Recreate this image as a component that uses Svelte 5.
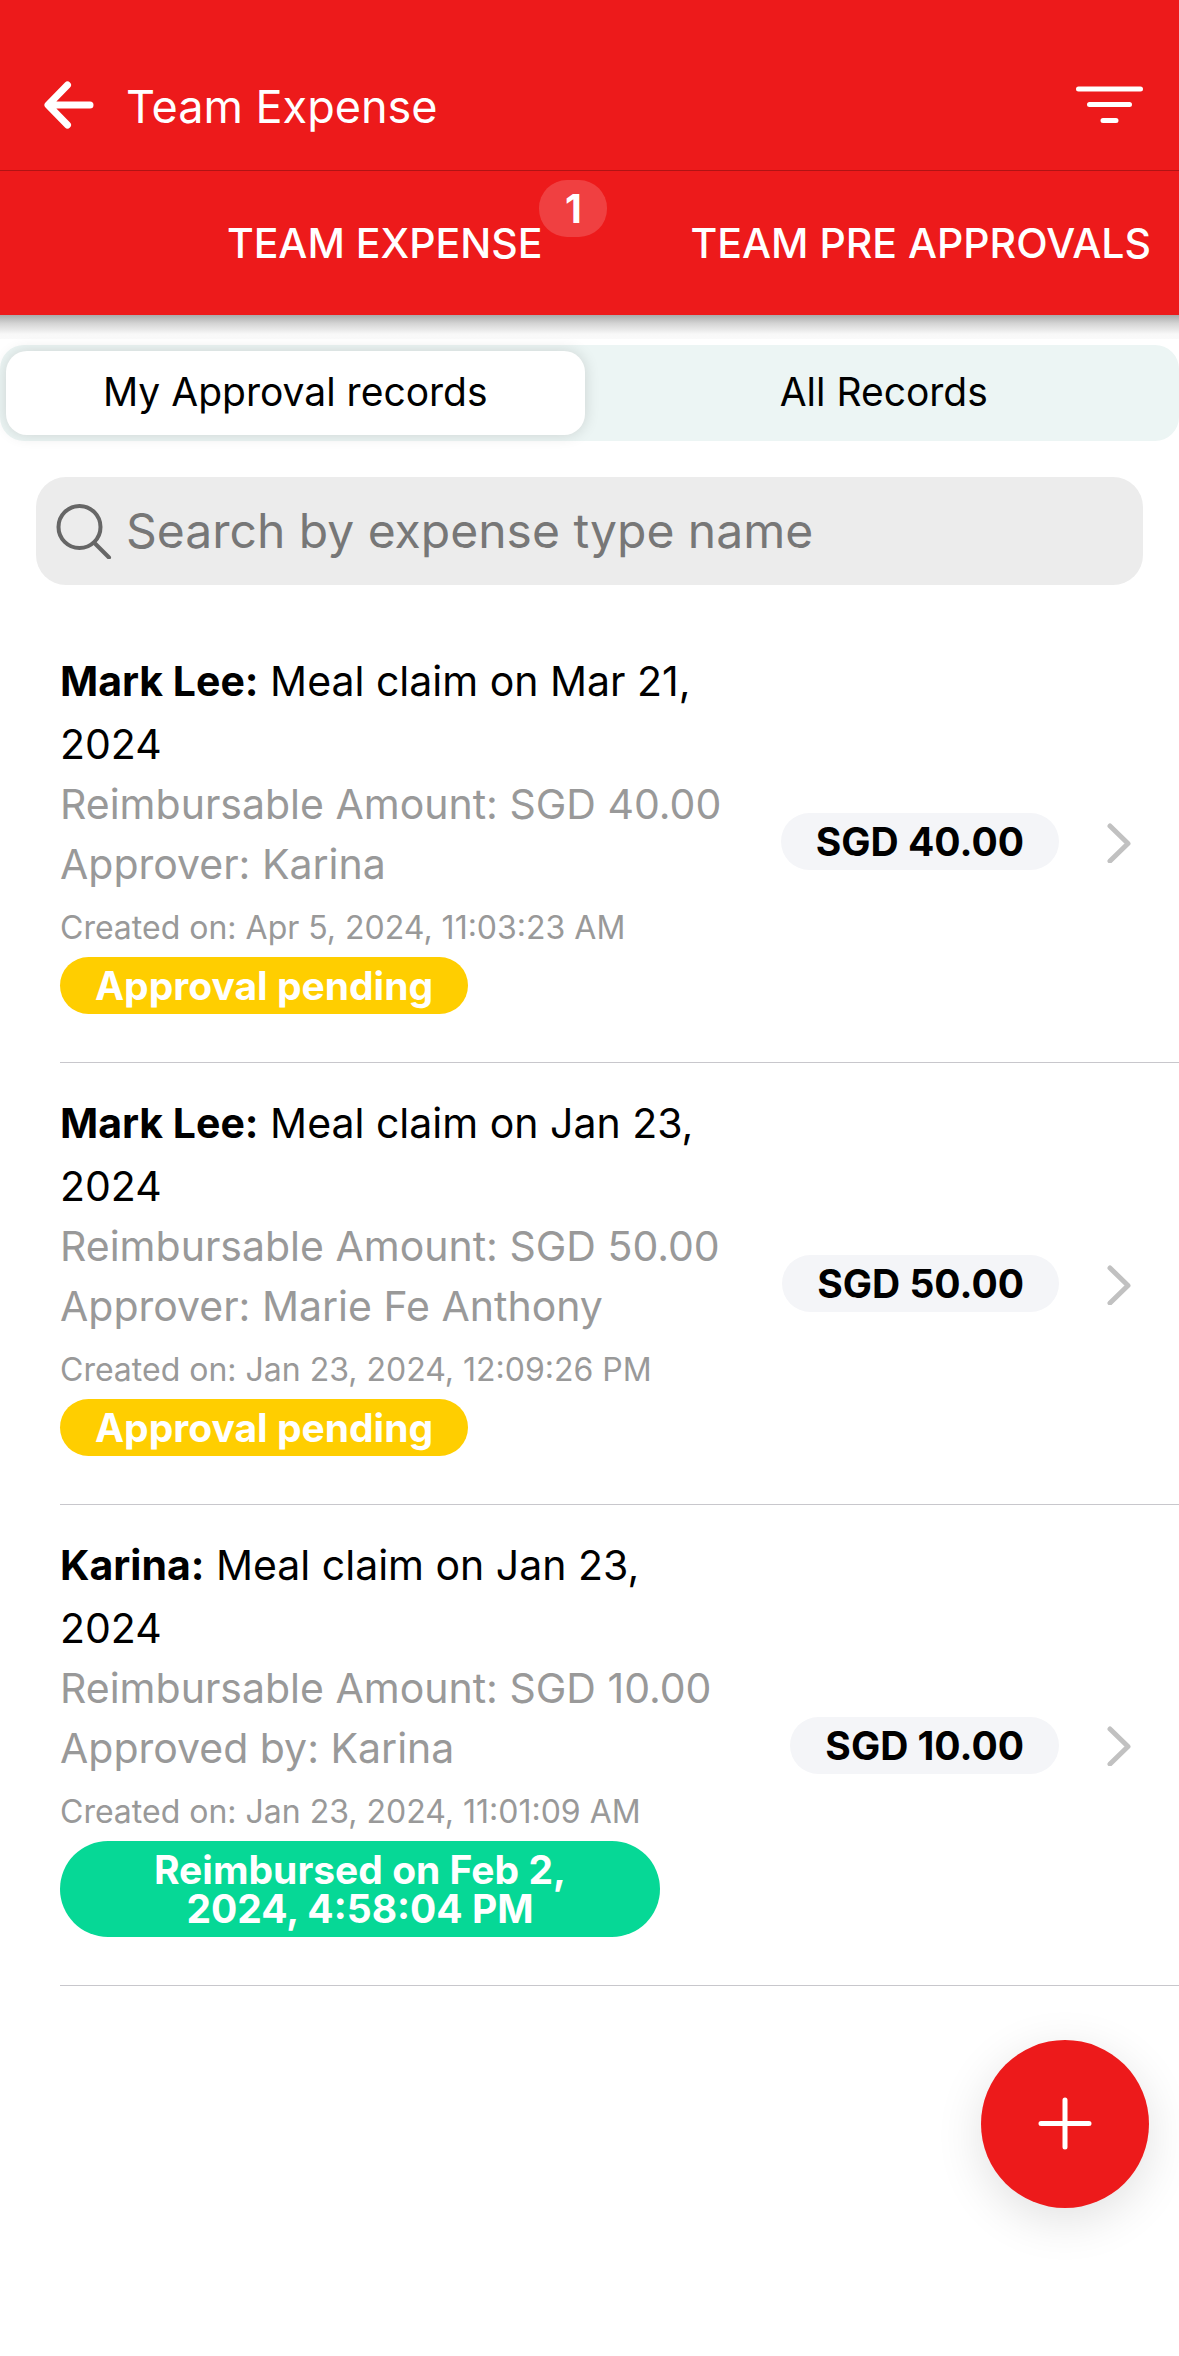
<script lang="ts">
	interface Expense {
		id: number;
		owner: string;
		title: string;
		amount: string;
		approval: string;
		createdOn: string;
		status: string;
		state: 'pending' | 'reimbursed';
	}

	const tabs = [
		{ id: 'expense', label: 'TEAM EXPENSE', count: 1 },
		{ id: 'pre-approvals', label: 'TEAM PRE APPROVALS', count: 0 }
	];

	const segments = [
		{ id: 'mine', label: 'My Approval records' },
		{ id: 'all', label: 'All Records' }
	];

	const expenses: Expense[] = [
		{
			id: 1,
			owner: 'Mark Lee',
			title: 'Meal claim on Mar 21, 2024',
			amount: 'SGD 40.00',
			approval: 'Approver: Karina',
			createdOn: 'Apr 5, 2024, 11:03:23 AM',
			status: 'Approval pending',
			state: 'pending'
		},
		{
			id: 2,
			owner: 'Mark Lee',
			title: 'Meal claim on Jan 23, 2024',
			amount: 'SGD 50.00',
			approval: 'Approver: Marie Fe Anthony',
			createdOn: 'Jan 23, 2024, 12:09:26 PM',
			status: 'Approval pending',
			state: 'pending'
		},
		{
			id: 3,
			owner: 'Karina',
			title: 'Meal claim on Jan 23, 2024',
			amount: 'SGD 10.00',
			approval: 'Approved by: Karina',
			createdOn: 'Jan 23, 2024, 11:01:09 AM',
			status: 'Reimbursed on Feb 2, 2024, 4:58:04 PM',
			state: 'reimbursed'
		}
	];

	let activeTab = $state('expense');
	let activeSegment = $state('mine');
	let search = $state('');

	const visible = $derived(
		expenses.filter((e) => e.title.toLowerCase().includes(search.trim().toLowerCase()))
	);
</script>

<div class="page">
	<header>
		<div class="toolbar">
			<button class="icon-btn" aria-label="Back">
				<svg width="52" height="52" viewBox="0 0 52 52" fill="none" stroke="currentColor" stroke-width="7" stroke-linecap="round" stroke-linejoin="round">
					<path d="M25.500 6 6 26l19.500 20M7 26h41" />
				</svg>
			</button>
			<h1>Team Expense</h1>
			<button class="icon-btn" aria-label="Filter">
				<svg width="67" height="40" viewBox="0 0 67 40" fill="none" stroke="currentColor" stroke-width="5" stroke-linecap="round">
					<path d="M2.500 4h62M13.500 19.500h40M27 35.500h13" />
				</svg>
			</button>
		</div>

		<nav class="tabs">
			{#each tabs as tab (tab.id)}
				<button
					class="tab"
					aria-current={activeTab === tab.id ? 'page' : undefined}
					onclick={() => (activeTab = tab.id)}
				>
					{tab.label}
					{#if tab.count}
						<span class="count">{tab.count}</span>
					{/if}
				</button>
			{/each}
		</nav>
	</header>

	<main>
		<div class="header-shadow"></div>

		<div class="segment">
			{#each segments as segment (segment.id)}
				<button
					class:active={activeSegment === segment.id}
					aria-pressed={activeSegment === segment.id}
					onclick={() => (activeSegment = segment.id)}
				>
					{segment.label}
				</button>
			{/each}
		</div>

		<label class="search">
			<svg width="56" height="56" viewBox="0 0 56 56" fill="none" stroke="currentColor" stroke-width="4" stroke-linecap="round">
				<circle cx="23.500" cy="24" r="21" />
				<path d="m38.500 40 14.500 14.500" />
			</svg>
			<input
				type="search"
				aria-label="Search by expense type name"
				placeholder="Search by expense type name"
				bind:value={search}
			/>
		</label>

		<ul class="list">
			{#each visible as expense (expense.id)}
				<li>
					<a class="item" href="#expense-{expense.id}">
						<div class="details">
							<h2><strong>{expense.owner}:</strong> {expense.title}</h2>
							<p>Reimbursable Amount: {expense.amount}</p>
							<p>{expense.approval}</p>
							<p class="created">Created on: {expense.createdOn}</p>
							<span class="badge {expense.state}">{expense.status}</span>
						</div>
						<span class="badge amount">{expense.amount}</span>
						<svg class="chevron" width="26" height="42" viewBox="0 0 26 42" fill="none" stroke="currentColor" stroke-width="5" stroke-linecap="round" stroke-linejoin="round">
							<path d="m5 5 18 17.500L5 40" />
						</svg>
					</a>
				</li>
			{/each}
		</ul>
	</main>

	<button class="fab" aria-label="Add expense">
		<svg width="54" height="54" viewBox="0 0 54 54" fill="none" stroke="currentColor" stroke-width="5" stroke-linecap="round">
			<path d="M27 3v47M3 26.500h48" />
		</svg>
	</button>
</div>

<style>
	:global(body) {
		background: #fff;
	}

	.page {
		min-height: 100vh;
		font-family: Inter, 'Liberation Sans', sans-serif;
		color: #000;
	}

	button {
		margin: 0;
		padding: 0;
		border: none;
		background: none;
		font: inherit;
		color: inherit;
		cursor: pointer;
	}

	svg {
		display: block;
		flex: none;
	}

	header {
		background: #ed1a1b;
		color: #fff;
	}

	.toolbar {
		display: flex;
		align-items: center;
		gap: 32px;
		height: 131px;
		padding: 39px 36px 0 42px;
		border-bottom: 1px solid rgba(0, 0, 0, 0.25);
	}

	.toolbar h1 {
		flex: 1;
		margin: 0;
		padding-top: 3px;
		font-size: 45px;
		font-weight: 400;
	}

	.tabs {
		display: flex;
		justify-content: flex-end;
		gap: 148px;
		padding: 0 28px;
	}

	.tab {
		position: relative;
		height: 144px;
		font-size: 41px;
		font-weight: 500;
		white-space: nowrap;
	}

	.count {
		position: absolute;
		top: 9px;
		left: 100%;
		width: 68px;
		margin-left: -3px;
		border-radius: 28px;
		background: rgba(255, 255, 255, 0.17);
		font-size: 39px;
		font-weight: 700;
		line-height: 57px;
		text-align: center;
	}

	.header-shadow {
		height: 24px;
		margin-bottom: 6px;
		background: linear-gradient(#aaa, #d4d4d4 35%, #f8f8f8 80%, #fafafa);
	}

	.segment {
		display: grid;
		grid-template-columns: 1fr 1fr;
		gap: 10px;
		padding: 6px;
		border-radius: 24px;
		background: #ecf5f4;
	}

	.segment button {
		height: 84px;
		padding-bottom: 3px;
		border-radius: 21px;
		font-size: 39px;
	}

	.segment button.active {
		background: #fff;
		box-shadow: 0 0 15px rgba(0, 0, 0, 0.14);
	}

	.search {
		display: flex;
		align-items: center;
		gap: 14px;
		height: 108px;
		margin: 36px 36px 0;
		padding: 0 20px;
		border-radius: 30px;
		background: #ececec;
		color: #666;
	}

	.search input {
		flex: 1;
		min-width: 0;
		padding: 0 0 2px;
		border: none;
		outline: none;
		background: none;
		font: inherit;
		font-size: 48px;
		color: #000;
	}

	.search input::placeholder {
		color: #777;
		opacity: 1;
	}

	.list {
		margin: 36px 0 0;
		padding: 0 0 0 60px;
		list-style: none;
	}

	.item {
		display: flex;
		align-items: center;
		padding-right: 48px;
		border-bottom: 1px solid #c8c7cc;
		color: inherit;
		text-decoration: none;
	}

	.details {
		display: flex;
		flex: 1;
		flex-direction: column;
		align-items: flex-start;
		min-width: 0;
		margin-right: 54px;
		padding: 29px 0 48px;
	}

	.details h2 {
		margin: 0;
		font-size: 41px;
		font-weight: 400;
		line-height: 63px;
	}

	.details p {
		margin: 0 0 4px;
		font-size: 41px;
		line-height: 56px;
		color: #999;
	}

	.details .created {
		margin: 3px 0 0;
		font-size: 32px;
		line-height: 58px;
	}

	.badge {
		max-width: 600px;
		box-sizing: border-box;
		padding: 9px 35px;
		border-radius: 48px;
		font-size: 39px;
		font-weight: 700;
		line-height: 39px;
		text-align: center;
	}

	.pending {
		background: #ffce00;
		color: #fff;
	}

	.reimbursed {
		padding: 9px 48px;
		background: #06d896;
		color: #fff;
	}

	.amount {
		flex: none;
		margin-right: 46px;
		background: #f4f5f8;
	}

	.chevron {
		color: #c1c1c1;
	}

	.fab {
		position: fixed;
		right: 30px;
		bottom: 148px;
		display: flex;
		align-items: center;
		justify-content: center;
		width: 168px;
		height: 168px;
		border-radius: 50%;
		background: #ed1a1b;
		color: #fff;
		box-shadow: 0 12px 48px rgba(0, 0, 0, 0.12);
	}
</style>
